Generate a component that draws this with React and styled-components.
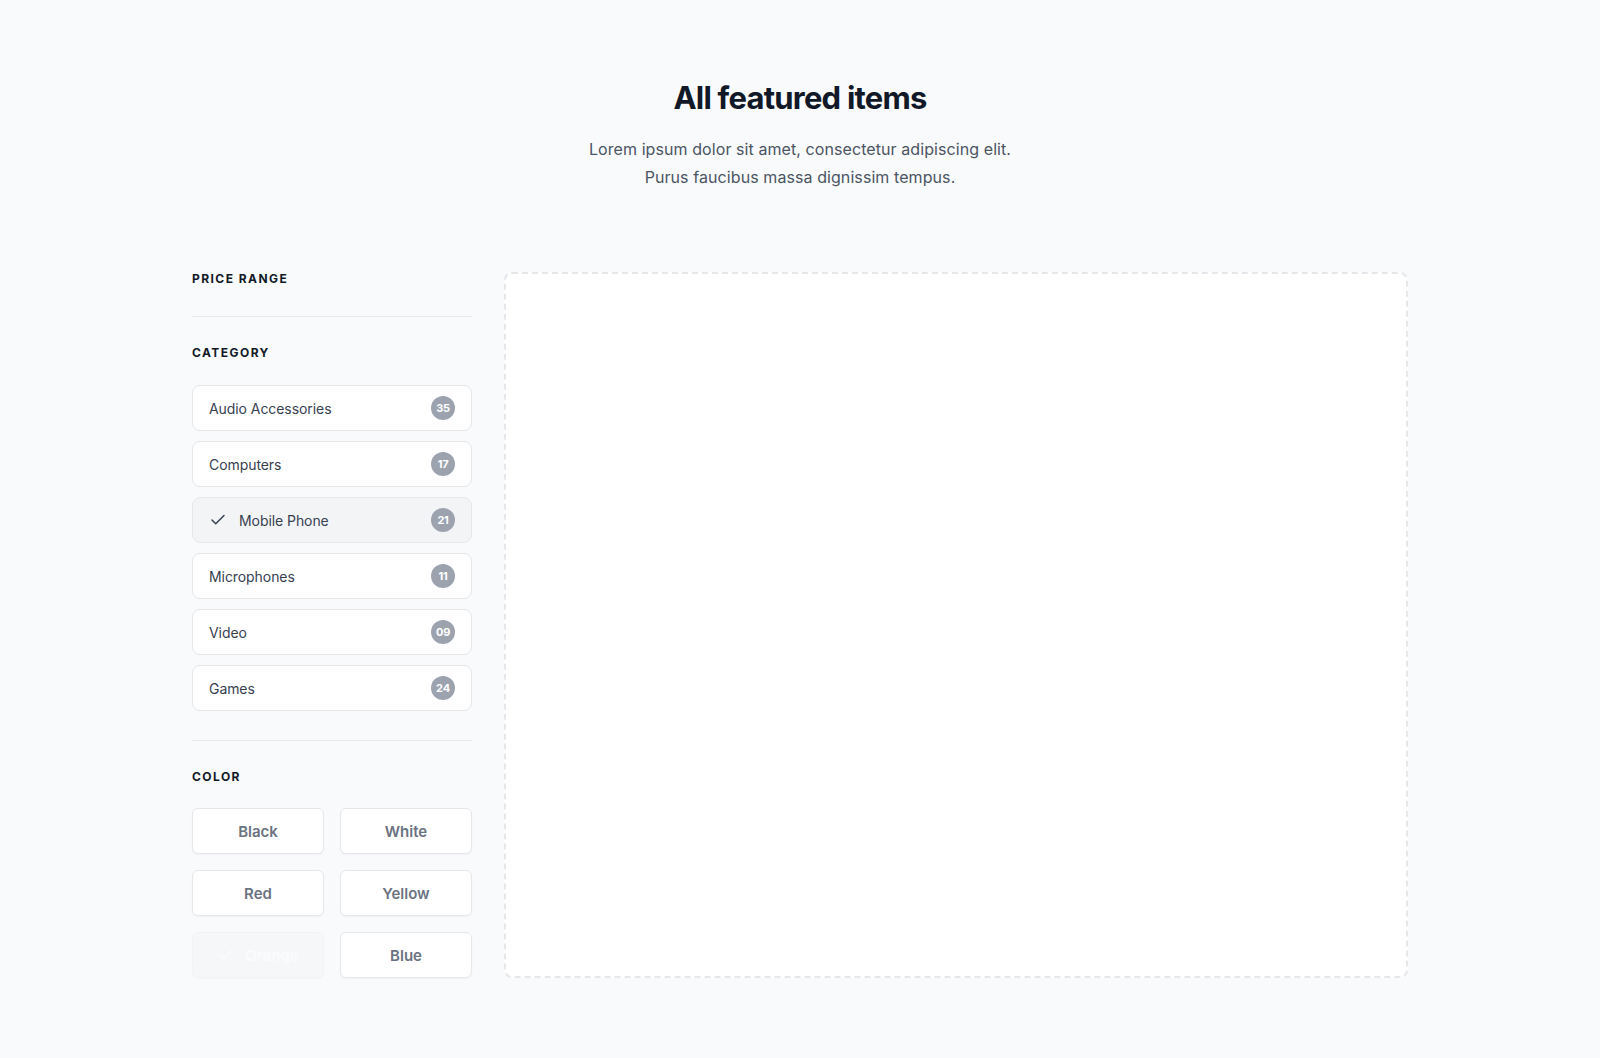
import React from 'react';
import styled, { createGlobalStyle } from 'styled-components';
import { Check } from 'lucide-react';

const GlobalStyle = createGlobalStyle`
  html, body {
    margin: 0;
    background: #f9fafb;
    font-family: Inter, "Noto Sans", sans-serif;
    -webkit-font-smoothing: antialiased;
  }
  * { box-sizing: border-box; }
`;

const Page = styled.div`
  min-height: 1058px;
  padding: 78px 32px 80px;
`;

const Header = styled.header`
  text-align: center;
`;

const Title = styled.h1`
  margin: 0;
  font-size: 31px;
  line-height: 40px;
  font-weight: 700;
  letter-spacing: -0.025em;
  color: #111827;
`;

const Lead = styled.p`
  margin: 17px auto 0;
  max-width: 440px;
  font-size: 16px;
  line-height: 28px;
  color: #4b5563;
  letter-spacing: 0.005em;
`;

const Layout = styled.div`
  max-width: 1216px;
  margin: 80px auto 0;
  display: grid;
  grid-template-columns: 280px 1fr;
  gap: 32px;
  align-items: start;
`;

const Sidebar = styled.aside`
  display: flex;
  flex-direction: column;
`;

const Section = styled.section`
  padding: ${p => p.$first ? '0' : '28px'} 0 ${p => p.$last ? '0' : '29px'};
  border-bottom: ${p => p.$last ? 'none' : '1px solid #e5e7eb'};
`;

const Label = styled.h3`
  margin: 0;
  font-size: 12px;
  line-height: 16px;
  font-weight: 700;
  letter-spacing: 0.12em;
  text-transform: uppercase;
  color: #111827;
`;

const CategoryList = styled.ul`
  list-style: none;
  margin: 24px 0 0;
  padding: 0;
  display: flex;
  flex-direction: column;
  gap: 10px;
`;

const CategoryItem = styled.li`
  height: 46px;
  display: flex;
  align-items: center;
  gap: 12px;
  padding: 0 16px;
  border: 1px solid #e5e7eb;
  border-radius: 8px;
  background: ${p => p.$active ? '#f3f4f6' : '#ffffff'};
  font-size: 14px;
  color: #374151;
  letter-spacing: -0.005em;
`;

const Name = styled.span`
  flex: 1;
`;

const Badge = styled.span`
  width: 24px;
  height: 24px;
  border-radius: 50%;
  background: #9ca3af;
  color: #ffffff;
  font-size: 11px;
  font-weight: 700;
  display: flex;
  align-items: center;
  justify-content: center;
  letter-spacing: -0.02em;
`;

const ColorGrid = styled.div`
  margin-top: 23px;
  display: grid;
  grid-template-columns: 1fr 1fr;
  gap: 16px;
`;

const ColorButton = styled.button`
  height: 46px;
  display: flex;
  align-items: center;
  justify-content: center;
  gap: 10px;
  border: 1px solid #e5e7eb;
  border-radius: 6px;
  background: ${p => p.$disabled ? '#f3f4f6' : '#ffffff'};
  box-shadow: 0 1px 2px rgba(0, 0, 0, 0.04);
  font-family: inherit;
  font-size: 15px;
  font-weight: 600;
  color: ${p => p.$disabled ? '#ffffff' : '#6b7280'};
  opacity: ${p => p.$disabled ? 0.35 : 1};
  cursor: pointer;
`;

const Panel = styled.main`
  margin-top: 1px;
  height: 706px;
  border: 2px dashed #e5e7eb;
  border-radius: 8px;
  background: #ffffff;
`;

const categories = [
  { name: 'Audio Accessories', count: '35' },
  { name: 'Computers', count: '17' },
  { name: 'Mobile Phone', count: '21', active: true },
  { name: 'Microphones', count: '11' },
  { name: 'Video', count: '09' },
  { name: 'Games', count: '24' },
];

const colors = [
  { name: 'Black' },
  { name: 'White' },
  { name: 'Red' },
  { name: 'Yellow' },
  { name: 'Orange', disabled: true },
  { name: 'Blue' },
];

export default function App() {
  return (
    <Page>
      <GlobalStyle />
      <Header>
        <Title>All featured items</Title>
        <Lead>
          Lorem ipsum dolor sit amet, consectetur adipiscing elit.
          <br />
          Purus faucibus massa dignissim tempus.
        </Lead>
      </Header>

      <Layout>
        <Sidebar>
          <Section $first>
            <Label>Price range</Label>
          </Section>

          <Section>
            <Label>Category</Label>
            <CategoryList>
              {categories.map(c => (
                <CategoryItem key={c.name} $active={c.active}>
                  {c.active && <Check size={18} strokeWidth={2} color="#374151" />}
                  <Name>{c.name}</Name>
                  <Badge>{c.count}</Badge>
                </CategoryItem>
              ))}
            </CategoryList>
          </Section>

          <Section $last>
            <Label>Color</Label>
            <ColorGrid>
              {colors.map(c => (
                <ColorButton key={c.name} $disabled={c.disabled}>
                  {c.disabled && <Check size={18} strokeWidth={2} />}
                  {c.name}
                </ColorButton>
              ))}
            </ColorGrid>
          </Section>
        </Sidebar>

        <Panel />
      </Layout>
    </Page>
  );
}
